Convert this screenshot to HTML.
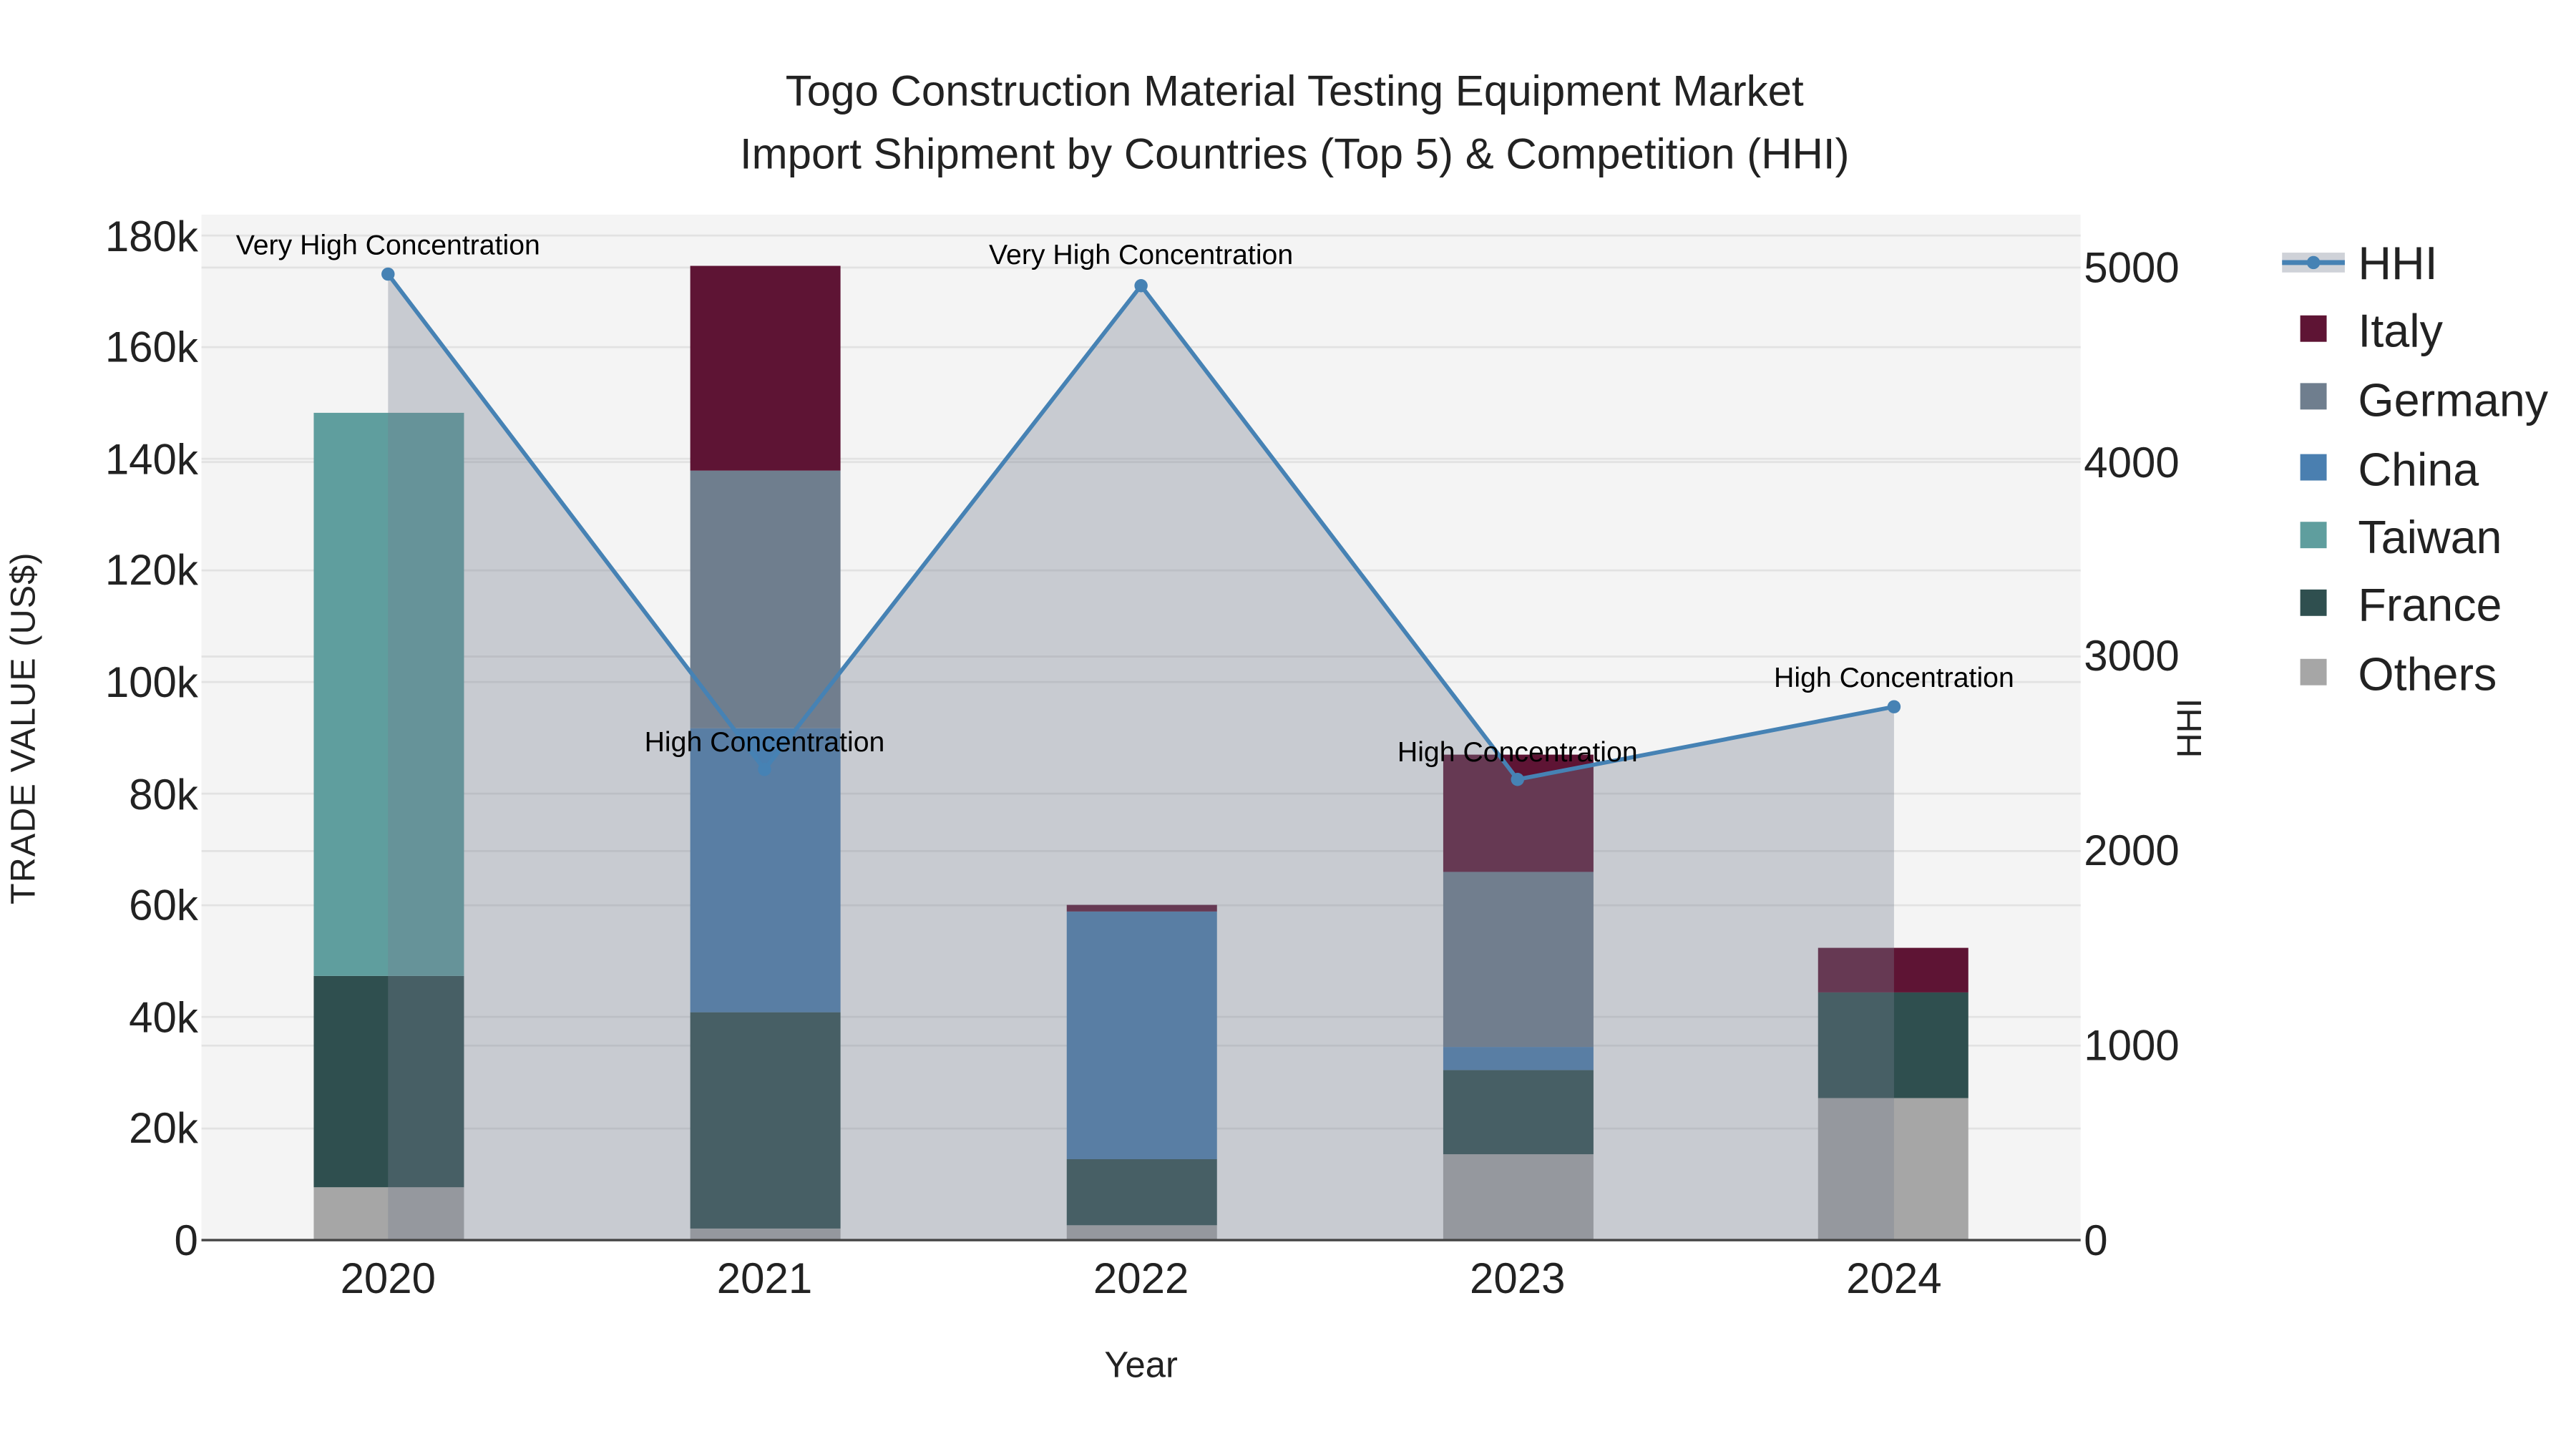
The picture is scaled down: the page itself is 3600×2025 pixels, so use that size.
<!DOCTYPE html>
<html><head><meta charset="utf-8"><style>
html,body{margin:0;padding:0;background:#fff;}
svg{display:block;}
text{font-family:"Liberation Sans",sans-serif;}
</style></head><body>
<svg width="3600" height="2025" viewBox="0 0 1560 877.5" xmlns="http://www.w3.org/2000/svg">
<rect x="0" y="0" width="1560" height="877.5" fill="#fff"/>
<rect x="122" y="130" width="1138" height="621" fill="#f4f4f4"/>
<g stroke="#e2e2e2" stroke-width="1.2">
<line x1="122" x2="1260" y1="683.4" y2="683.4"/><line x1="122" x2="1260" y1="615.8" y2="615.8"/>
<line x1="122" x2="1260" y1="548.2" y2="548.2"/><line x1="122" x2="1260" y1="480.6" y2="480.6"/>
<line x1="122" x2="1260" y1="413" y2="413"/><line x1="122" x2="1260" y1="345.4" y2="345.4"/>
<line x1="122" x2="1260" y1="277.8" y2="277.8"/><line x1="122" x2="1260" y1="210.2" y2="210.2"/>
<line x1="122" x2="1260" y1="142.6" y2="142.6"/>
<line x1="122" x2="1260" y1="633.2" y2="633.2"/><line x1="122" x2="1260" y1="515.4" y2="515.4"/>
<line x1="122" x2="1260" y1="397.6" y2="397.6"/><line x1="122" x2="1260" y1="279.8" y2="279.8"/>
<line x1="122" x2="1260" y1="162" y2="162"/>
</g>
<g>
<rect x="190" y="719" width="91" height="32" fill="#a6a6a6"/>
<rect x="190" y="591" width="91" height="128" fill="#2f4f4f"/>
<rect x="190" y="250" width="91" height="341" fill="#5f9e9e"/>

<rect x="418" y="744" width="91" height="7" fill="#a6a6a6"/>
<rect x="418" y="613" width="91" height="131" fill="#2f4f4f"/>
<rect x="418" y="441" width="91" height="172" fill="#4a7fb0"/>
<rect x="418" y="285" width="91" height="156" fill="#6f7e8e"/>
<rect x="418" y="161" width="91" height="124" fill="#5e1434"/>

<rect x="646" y="742" width="91" height="9" fill="#a6a6a6"/>
<rect x="646" y="702" width="91" height="40" fill="#2f4f4f"/>
<rect x="646" y="552" width="91" height="150" fill="#4a7fb0"/>
<rect x="646" y="548" width="91" height="4" fill="#5e1434"/>

<rect x="874" y="699" width="91" height="52" fill="#a6a6a6"/>
<rect x="874" y="648" width="91" height="51" fill="#2f4f4f"/>
<rect x="874" y="634" width="91" height="14" fill="#4a7fb0"/>
<rect x="874" y="528" width="91" height="106" fill="#6f7e8e"/>
<rect x="874" y="457" width="91" height="71" fill="#5e1434"/>

<rect x="1101" y="665" width="91" height="86" fill="#a6a6a6"/>
<rect x="1101" y="601" width="91" height="64" fill="#2f4f4f"/>
<rect x="1101" y="574" width="91" height="27" fill="#5e1434"/>
</g>
<polygon points="235,751 235,166 463,466 691,173 919,472 1147,428 1147,751" fill="rgba(118,126,143,0.35)"/>
<line x1="122" x2="1260" y1="751" y2="751" stroke="#444" stroke-width="1.5"/>
<polyline points="235,166 463,466 691,173 919,472 1147,428" fill="none" stroke="#4682b4" stroke-width="2.5"/>
<g fill="#4682b4"><circle cx="235" cy="166" r="4"/><circle cx="463" cy="466" r="4"/><circle cx="691" cy="173" r="4"/><circle cx="919" cy="472" r="4"/><circle cx="1147" cy="428" r="4"/></g>
<g font-size="17" text-anchor="middle" fill="#000">
<text x="235" y="154">Very High Concentration</text>
<text x="463" y="455">High Concentration</text>
<text x="691" y="160">Very High Concentration</text>
<text x="919" y="461">High Concentration</text>
<text x="1147" y="416">High Concentration</text>
</g>
<g font-size="26" text-anchor="end" fill="#222">
<text x="120" y="760">0</text><text x="120" y="692">20k</text><text x="120" y="625">40k</text>
<text x="120" y="557">60k</text><text x="120" y="490">80k</text><text x="120" y="422">100k</text>
<text x="120" y="354">120k</text><text x="120" y="287">140k</text><text x="120" y="219">160k</text>
<text x="120" y="152">180k</text>
</g>
<g font-size="26" text-anchor="start" fill="#222">
<text x="1262" y="760">0</text><text x="1262" y="642">1000</text><text x="1262" y="524">2000</text>
<text x="1262" y="406">3000</text><text x="1262" y="289">4000</text><text x="1262" y="171">5000</text>
</g>
<g font-size="26" text-anchor="middle" fill="#222">
<text x="235" y="783">2020</text><text x="463" y="783">2021</text><text x="691" y="783">2022</text>
<text x="919" y="783">2023</text><text x="1147" y="783">2024</text>
</g>
<text x="691" y="834" font-size="22" text-anchor="middle" fill="#222">Year</text>
<text transform="translate(21,441) rotate(-90)" font-size="21" text-anchor="middle" fill="#222" letter-spacing="0.5">TRADE VALUE (US$)</text>
<text transform="translate(1333,441) rotate(-90)" font-size="21" text-anchor="middle" fill="#222">HHI</text>
<g font-size="26" text-anchor="middle" fill="#222">
<text x="784" y="64">Togo Construction Material Testing Equipment Market</text>
<text x="784" y="102">Import Shipment by Countries (Top 5) &amp; Competition (HHI)</text>
</g>
<rect x="1382" y="153" width="38" height="12" fill="rgba(118,126,143,0.35)"/>
<line x1="1382" x2="1420" y1="159" y2="159" stroke="#4682b4" stroke-width="3"/>
<circle cx="1401" cy="159" r="4" fill="#4682b4"/>
<rect x="1393" y="191" width="16" height="16" fill="#5e1434"/>
<rect x="1393" y="232" width="16" height="16" fill="#6f7e8e"/>
<rect x="1393" y="275" width="16" height="16" fill="#4a7fb0"/>
<rect x="1393" y="316" width="16" height="16" fill="#5f9e9e"/>
<rect x="1393" y="357" width="16" height="16" fill="#2f4f4f"/>
<rect x="1393" y="399" width="16" height="16" fill="#a6a6a6"/>
<g font-size="28" fill="#222">
<text x="1428" y="169">HHI</text><text x="1428" y="210">Italy</text><text x="1428" y="252">Germany</text>
<text x="1428" y="294">China</text><text x="1428" y="335">Taiwan</text><text x="1428" y="376">France</text>
<text x="1428" y="418">Others</text>
</g>
</svg>
</body></html>
